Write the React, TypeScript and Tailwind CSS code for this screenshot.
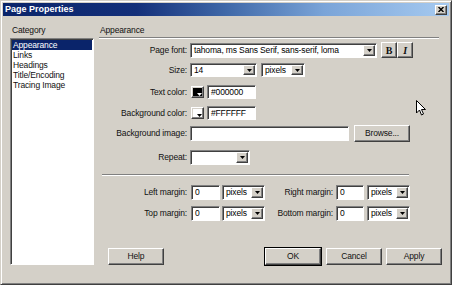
import React from 'react';

const sunken =
  'border border-t-[#808080] border-l-[#808080] border-b-white border-r-white shadow-[inset_1px_1px_0_#404040]';
const raised =
  'border border-t-white border-l-white border-b-[#404040] border-r-[#404040] shadow-[inset_-1px_-1px_0_#808080] bg-[#d4d0c8]';

function Arrow({ color = '#000' }: { color?: string }) {
  return (
    <svg width="5" height="3" viewBox="0 0 5 3">
      <path d="M0 0 H5 L2.5 3 Z" fill={color} />
    </svg>
  );
}

function Select({ w, h = 14, value }: { w: string; h?: number; value: string }) {
  return (
    <div className={`${sunken} ${w} flex bg-white`} style={{ height: h }}>
      <div className="flex-1 truncate pl-[3px] leading-[12px] text-black">{value}</div>
      <div className={`${raised} m-[1px] flex w-[12px] items-center justify-center`}>
        <Arrow />
      </div>
    </div>
  );
}

function Input({ w, value = '', h = 14 }: { w: string; value?: string; h?: number }) {
  return (
    <div className={`${sunken} ${w} bg-white pl-[3px] leading-[12px] text-black`} style={{ height: h }}>
      {value}
    </div>
  );
}

function Swatch({ dark }: { dark: boolean }) {
  return (
    <div className={`${raised} relative h-[12px] w-[13px] p-[1px]`}>
      <div className={`h-full w-full ${dark ? 'bg-black' : 'bg-white'}`} />
      <div className="absolute bottom-[1px] right-[1px]">
        <Arrow color={dark ? '#fff' : '#000'} />
      </div>
    </div>
  );
}

function Button({ label, def }: { label: string; def?: boolean }) {
  return (
    <div
      className={`${raised} flex h-[17px] w-[56px] items-center justify-center ${def ? 'outline outline-1 outline-black' : ''}`}
    >
      {label}
    </div>
  );
}

export default function App() {
  const cats = ['Appearance', 'Links', 'Headings', 'Title/Encoding', 'Tracing Image'];
  return (
    <div className="relative h-[285px] w-[452px] select-none overflow-hidden bg-[#d4d0c8] font-['Liberation_Sans',Arial,sans-serif] text-[8.5px] tracking-[-0.15px] text-[#111]">
      <div className="flex h-full flex-col border border-t-[#d4d0c8] border-l-[#d4d0c8] border-b-[#404040] border-r-[#404040] p-[1px] shadow-[inset_1px_1px_0_#fff,inset_-1px_-1px_0_#808080]">
        {/* Title bar */}
        <div className="mx-[1px] mt-[1px] flex h-[13px] items-center bg-[linear-gradient(to_right,#0a246a_0%,#14307a_30%,#3f68a8_50%,#7aa4d8_72%,#a6caf0_100%)] px-[2px]">
          <span className="text-[9px] font-bold leading-[13px] tracking-normal text-white">Page Properties</span>
          <div className={`${raised} ml-auto flex h-[10px] w-[12px] items-center justify-center`}>
            <svg width="6" height="5" viewBox="0 0 6 5">
              <path d="M0.5 0 L5.5 5 M5.5 0 L0.5 5" stroke="#000" strokeWidth="1.4" />
            </svg>
          </div>
        </div>

        {/* Body */}
        <div className="mt-[9px] flex">
          {/* Category */}
          <div className="ml-[8px] w-[84px]">
            <div className="h-[10px] pl-[2px] leading-[10px]">Category</div>
            <div className={`${sunken} mt-[3px] h-[227px] bg-white p-[1px]`}>
              {cats.map((c, i) => (
                <div
                  key={c}
                  className={`h-[10px] pl-[1px] leading-[10px] ${i === 0 ? 'bg-[#0a246a] text-white' : ''}`}
                >
                  {c}
                </div>
              ))}
            </div>
          </div>

          {/* Appearance */}
          <div className="ml-[5px] flex w-[343px] flex-col">
            <div className="h-[10px] pl-[1px] leading-[10px]">Appearance</div>
            <div className="mt-[2px] h-[2px] w-[340px] border-t border-b border-t-[#808080] border-b-white" />

            <div className="mt-[3px] flex h-[16px] items-center">
              <div className="w-[89px] pr-[1px] text-right">Page font:</div>
              <div className="ml-[2px]">
                <Select w="w-[187px]" h={15} value="tahoma, ms Sans Serif, sans-serif, loma" />
              </div>
              <div className={`${raised} ml-[4px] flex h-[16px] w-[16px] items-center justify-center font-['Liberation_Serif',serif] text-[10px] font-bold`}>
                B
              </div>
              <div className={`${raised} flex h-[16px] w-[16px] items-center justify-center font-['Liberation_Serif',serif] text-[10px] font-bold italic`}>
                I
              </div>
            </div>

            <div className="mt-[4px] flex h-[16px] items-center">
              <div className="w-[89px] pr-[1px] text-right">Size:</div>
              <div className="ml-[2px]">
                <Select w="w-[67px]" value="14" />
              </div>
              <div className="ml-[4px]">
                <Select w="w-[44px]" value="pixels" />
              </div>
            </div>

            <div className="mt-[6px] flex h-[16px] items-center">
              <div className="w-[89px] pr-[1px] text-right">Text color:</div>
              <div className="ml-[3px]">
                <Swatch dark />
              </div>
              <div className="ml-[3px]">
                <Input w="w-[49px]" value="#000000" />
              </div>
            </div>

            <div className="mt-[5px] flex h-[16px] items-center">
              <div className="w-[89px] pr-[1px] text-right">Background color:</div>
              <div className="ml-[3px]">
                <Swatch dark={false} />
              </div>
              <div className="ml-[3px]">
                <Input w="w-[49px]" value="#FFFFFF" />
              </div>
            </div>

            <div className="mt-[4px] flex h-[17px] items-center">
              <div className="w-[89px] pr-[1px] text-right">Background image:</div>
              <div className="ml-[2px]">
                <Input w="w-[159px]" h={15} />
              </div>
              <div className="ml-[5px]">
                <div className={`${raised} flex h-[17px] w-[56px] items-center justify-center`}>Browse...</div>
              </div>
            </div>

            <div className="mt-[7px] flex h-[16px] items-center">
              <div className="w-[89px] pr-[1px] text-right">Repeat:</div>
              <div className="ml-[2px]">
                <Select w="w-[60px]" h={15} value="" />
              </div>
            </div>

            <div className="ml-[3px] mt-[9px] h-[2px] w-[307px] border-t border-b border-t-[#808080] border-b-white" />

            <div className="mt-[8px] flex h-[16px] items-center">
              <div className="w-[89px] pr-[1px] text-right">Left margin:</div>
              <div className="ml-[3px]">
                <Input w="w-[29px]" h={15} value="0" />
              </div>
              <div className="ml-[2px]">
                <Select w="w-[43px]" h={15} value="pixels" />
              </div>
              <div className="w-[69px] pr-[1px] text-right">Right margin:</div>
              <div className="ml-[2px]">
                <Input w="w-[28px]" h={15} value="0" />
              </div>
              <div className="ml-[3px]">
                <Select w="w-[43px]" h={15} value="pixels" />
              </div>
            </div>

            <div className="mt-[5px] flex h-[16px] items-center">
              <div className="w-[89px] pr-[1px] text-right">Top margin:</div>
              <div className="ml-[3px]">
                <Input w="w-[29px]" h={15} value="0" />
              </div>
              <div className="ml-[2px]">
                <Select w="w-[43px]" h={15} value="pixels" />
              </div>
              <div className="w-[69px] pr-[1px] text-right">Bottom margin:</div>
              <div className="ml-[2px]">
                <Input w="w-[28px]" h={15} value="0" />
              </div>
              <div className="ml-[3px]">
                <Select w="w-[43px]" h={15} value="pixels" />
              </div>
            </div>

            <div className="mt-[27px] flex items-center">
              <div className="ml-[9px]">
                <Button label="Help" />
              </div>
              <div className="ml-[101px]">
                <Button label="OK" def />
              </div>
              <div className="ml-[5px]">
                <Button label="Cancel" />
              </div>
              <div className="ml-[4px]">
                <Button label="Apply" />
              </div>
            </div>
          </div>
        </div>
      </div>

      {/* mouse pointer */}
      <svg className="absolute left-[416px] top-[100px]" width="10" height="16" viewBox="0 0 10 16">
        <path d="M0.5 0.5 V13 L3.5 10 L5.5 15 L7.5 14 L5.5 9.5 H9.5 Z" fill="#fff" stroke="#000" strokeWidth="1" strokeLinejoin="round" />
      </svg>
    </div>
  );
}
